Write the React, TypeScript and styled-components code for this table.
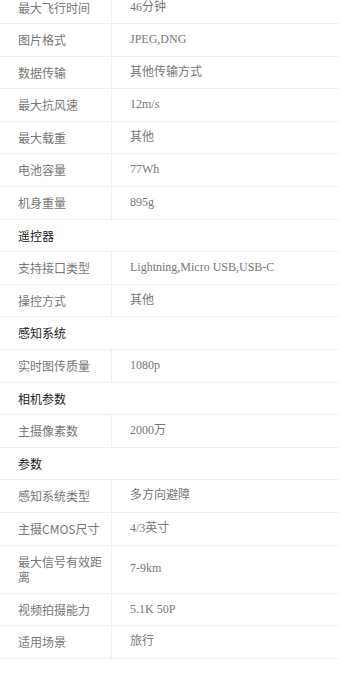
import React from "react";
import styled, { createGlobalStyle } from "styled-components";

const Global = createGlobalStyle`
  html, body { margin: 0; padding: 0; background: #fff; overflow: hidden; }
`;

type Item =
  | { kind: "row"; label: string; value: string }
  | { kind: "section"; title: string };

const items: Item[] = [
  { kind: "row", label: "最大飞行时间", value: "46分钟" },
  { kind: "row", label: "图片格式", value: "JPEG,DNG" },
  { kind: "row", label: "数据传输", value: "其他传输方式" },
  { kind: "row", label: "最大抗风速", value: "12m/s" },
  { kind: "row", label: "最大载重", value: "其他" },
  { kind: "row", label: "电池容量", value: "77Wh" },
  { kind: "row", label: "机身重量", value: "895g" },
  { kind: "section", title: "遥控器" },
  { kind: "row", label: "支持接口类型", value: "Lightning,Micro USB,USB-C" },
  { kind: "row", label: "操控方式", value: "其他" },
  { kind: "section", title: "感知系统" },
  { kind: "row", label: "实时图传质量", value: "1080p" },
  { kind: "section", title: "相机参数" },
  { kind: "row", label: "主摄像素数", value: "2000万" },
  { kind: "section", title: "参数" },
  { kind: "row", label: "感知系统类型", value: "多方向避障" },
  { kind: "row", label: "主摄CMOS尺寸", value: "4/3英寸" },
  { kind: "row", label: "最大信号有效距离", value: "7-9km" },
  { kind: "row", label: "视频拍摄能力", value: "5.1K 50P" },
  { kind: "row", label: "适用场景", value: "旅行" },
];

const Table = styled.div`
  width: 339px;
  margin-top: -8.6px;
  display: flex;
  flex-direction: column;
`;

const Row = styled.div`
  display: grid;
  grid-template-columns: 112px 1fr;
  border-bottom: 1px solid #eeeeee;
`;

const Label = styled.div`
  border-right: 1px solid #eeeeee;
  padding: 8.1px 8px 8.1px 18px;
  font-family: "Noto Sans CJK SC", "Noto Sans", sans-serif;
  font-size: 12px;
  line-height: 15.4px;
  color: #777;
  display: flex;
  align-items: center;
`;

const Value = styled.div`
  padding: 8.1px 10px 8.1px 18px;
  font-family: "Liberation Serif", "Noto Sans CJK SC", serif;
  font-size: 12px;
  line-height: 15.4px;
  color: #777;
  display: flex;
  align-items: center;
`;

const Section = styled.div`
  border-bottom: 1px solid #eeeeee;
  padding: 8.1px 18px;
  font-family: "Noto Sans CJK SC", "Noto Sans", sans-serif;
  font-size: 12px;
  line-height: 15.4px;
  color: #1a1a1a;
`;

export default function App() {
  return (
    <>
      <Global />
      <Table>
        {items.map((it, i) =>
          it.kind === "section" ? (
            <Section key={i}>{it.title}</Section>
          ) : (
            <Row key={i}>
              <Label>{it.label}</Label>
              <Value>{it.value}</Value>
            </Row>
          )
        )}
      </Table>
    </>
  );
}
